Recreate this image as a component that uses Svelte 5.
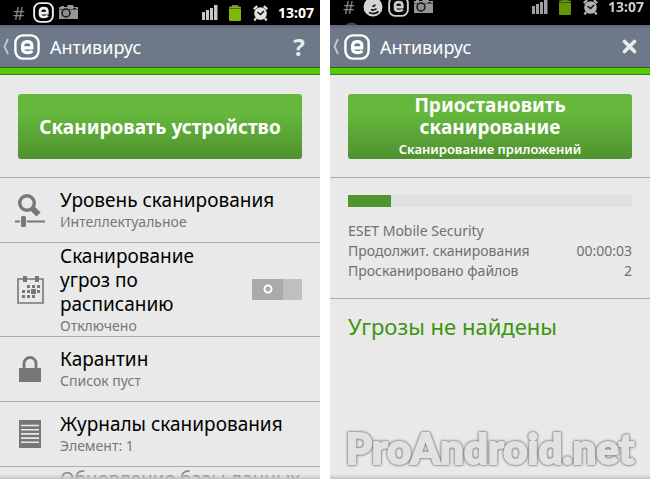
<script>
	let scheduled = false;
	let scanned = 15;
	const clock = '13:07';
	const rows = [
		{ icon: 'level', title: 'Уровень сканирования', note: 'Интеллектуальное' },
		{ icon: 'calendar', title: 'Сканирование угроз по расписанию', note: 'Отключено' },
		{ icon: 'lock', title: 'Карантин', note: 'Список пуст' },
		{ icon: 'logs', title: 'Журналы сканирования', note: 'Элемент: 1' }
	];
	const stats = [
		{ name: 'Продолжит. сканирования', value: '00:00:03' },
		{ name: 'Просканировано файлов', value: '2' }
	];
</script>

{#snippet eset(size)}
	<svg width={size} height={size} viewBox="0 0 26 26">
		<rect x="1.400" y="1.400" width="23.200" height="23.200" rx="7.500" fill="none" stroke="currentColor" stroke-width="2.400" />
		<path d="M9 13.800H17.800V11.500Q17.800 7.600 13.200 7.600T8.600 12V14.500Q8.600 18.600 13.200 18.600Q17 18.600 18.200 16.800" fill="none" stroke="currentColor" stroke-width="3.200" />
	</svg>
{/snippet}

{#snippet camera()}
	<svg width="19" height="15" viewBox="0 0 19 15">
		<path d="M0 2h2V1h3v1h3l1-2h5l1 2h4v12H0z" fill="#969696" />
		<path d="M0 4.500h19" stroke="#555" />
		<circle cx="7" cy="8" r="4" fill="#8a8a8a" stroke="#151515" stroke-width="1.500" />
		<path d="M14 3.500h3" stroke="#222" />
	</svg>
{/snippet}

{#snippet device()}
	<div class="device">
		<svg class="signal" width="16" height="15" viewBox="0 0 16 15">
			<path d="M0 7h3v8H0zM4 5h3v10H4zM8 3h3v12H8zM12 0h3.500v15H12z" fill="#c8c8c8" />
		</svg>
		<svg class="battery" width="12" height="16" viewBox="0 0 12 16">
			<path d="M3 0h6v2H3z" fill="#777" />
			<rect y="1.500" width="12" height="14.500" rx="1" fill="#80b90c" />
			<path d="M0 3.500h12" stroke="#4b7204" />
		</svg>
		<svg class="alarm" width="15" height="16" viewBox="0 0 15 16">
			<path d="M3 13l-1.500 2.500M12 13l1.500 2.500M.8 4.200l3.400-3M14.200 4.200l-3.400-3" stroke="#ddd" stroke-width="2.400" />
			<circle cx="7.500" cy="8.500" r="6.300" fill="#e2e2e2" />
			<path d="M4.500 7l3 2.500L11 6" fill="none" stroke="#111" stroke-width="1.500" />
		</svg>
		<time>{clock}</time>
	</div>
{/snippet}

{#snippet back()}
	<a class="back" href="#main" aria-label="Назад">
		<svg width="6" height="17" viewBox="0 0 6 17">
			<path d="M5 1L1.500 8.500 5 16" fill="none" stroke="#c3c9d0" stroke-width="1.800" />
		</svg>
		{@render eset(26)}
	</a>
{/snippet}

<main>
	<section class="screen">
		<div class="status">
			<div class="line">
				<span class="hash">#</span>
				{@render eset(21)}
				{@render camera()}
				{@render device()}
			</div>
		</div>
		<header>
			{@render back()}
			<h1>Антивирус</h1>
			<button class="action help" aria-label="Справка">?</button>
		</header>
		<div class="top">
			<button class="scan">Сканировать устройство</button>
		</div>
		<ul>
			{#each rows as row}
				<li class:tall={row.icon == 'calendar'}>
					<div class="icon">
						{#if row.icon == 'level'}
							<svg width="32" height="34" viewBox="0 0 32 34">
								<circle cx="13" cy="10" r="7.300" fill="none" stroke="#777" stroke-width="3.400" />
								<path d="M17.500 14.500l7 7" stroke="#777" stroke-width="6" />
								<path d="M1 28.500h5M13 28.500h18" stroke="#777" stroke-width="2" />
								<rect x="7" y="23" width="5" height="11" rx="1.500" fill="#777" />
							</svg>
						{:else if row.icon == 'calendar'}
							<svg width="27" height="28" viewBox="0 0 27 28">
								<path d="M1 3h25v24H1z" fill="none" stroke="#777" stroke-width="1.600" />
								<path d="M6 0h4v6H6zM18 0h4v6h-4z" fill="#777" />
								<path d="M10 9h3v3h-3zM15 9h3v3h-3zM20 9h3v3h-3zM5 14h3v3H5zM10 14h3v3h-3zM14 13h5v5h-5zM20 14h3v3h-3zM5 19h3v3H5zM10 19h3v3h-3zM15 19h3v3h-3z" fill="#777" />
							</svg>
						{:else if row.icon == 'lock'}
							<svg width="22" height="26" viewBox="0 0 22 26">
								<path d="M0 12h22v14H0z" fill="#777" />
								<path d="M5 13V7.500a6 6 0 0 1 12 0V13" fill="none" stroke="#777" stroke-width="2.800" />
							</svg>
						{:else}
							<svg width="22" height="28" viewBox="0 0 22 28">
								<path d="M0 0h22v28H0z" fill="#777" />
								<path d="M2 5.500h18M2 9.700h18M2 13.900h18M2 18.100h18M2 22.300h18" stroke="#e9e9e9" stroke-width="1.600" />
							</svg>
						{/if}
					</div>
					{#if row.icon == 'calendar'}
						<label class="text" for="schedule">
							<span class="title">{row.title}</span>
							<span class="note">{row.note}</span>
						</label>
						<input id="schedule" class="switch" type="checkbox" bind:checked={scheduled}>
					{:else}
						<button class="text">
							<span class="title">{row.title}</span>
							<span class="note">{row.note}</span>
						</button>
					{/if}
				</li>
			{/each}
			<li class="next">
				<div class="icon"></div>
				<button class="text">
					<span class="title">Обновление базы данных</span>
				</button>
			</li>
		</ul>
		<div class="fade"></div>
	</section>

	<section class="screen">
		<div class="status scrolled">
			<div class="line">
				<span class="hash">#</span>
				<svg width="20" height="20" viewBox="0 0 20 20">
					<circle cx="10" cy="10" r="9.500" fill="#d5d5d5" />
					<path d="M6 15.500c3 1.500 7 1 9.500-1M8 12.500c2 1 4 .5 5.500-1M9.500 9.500l3-1.500" fill="none" stroke="#111" stroke-width="1.700" />
				</svg>
				{@render eset(21)}
				{@render camera()}
				{@render device()}
			</div>
			<div class="line second">
				<svg width="17" height="17" viewBox="0 0 17 17">
					<circle cx="8.500" cy="8.500" r="8" fill="#444" />
					<path d="M4 4l4 2 5-1" stroke="#111" stroke-width="2" fill="none" />
				</svg>
			</div>
		</div>
		<header>
			{@render back()}
			<h1>Антивирус</h1>
			<button class="action" aria-label="Закрыть">
				<svg width="15" height="15" viewBox="0 0 15 15">
					<path d="M2.500 2.500l10 10M12.500 2.500l-10 10" stroke="#e9ecef" stroke-width="3.600" stroke-linecap="round" />
				</svg>
			</button>
		</header>
		<div class="top">
			<button class="scan">
				Приостановить<br>сканирование
				<small>Сканирование приложений</small>
			</button>
		</div>
		<div class="progress">
			<progress max="100" value={scanned} aria-label="Сканирование"></progress>
			<p>ESET Mobile Security</p>
			<dl>
				{#each stats as stat}
					<div>
						<dt>{stat.name}</dt>
						<dd>{stat.value}</dd>
					</div>
				{/each}
			</dl>
		</div>
		<h2>Угрозы не найдены</h2>
		<div class="mark">ProAndroid.net</div>
		<div class="fade"></div>
	</section>
</main>

<style>
	:global(body) {
		margin: 0;
		background: #fff;
	}
	main {
		display: grid;
		grid-template-columns: 1fr 1fr;
		gap: 10px;
		height: 100vh;
		font-family: "Noto Sans", "Open Sans", sans-serif;
	}
	.screen {
		position: relative;
		display: flex;
		flex-direction: column;
		min-width: 0;
		overflow: hidden;
		background: #e9e9e9;
	}
	button {
		padding: 0;
		border: 0;
		background: none;
		font: inherit;
		color: inherit;
		cursor: pointer;
	}
	svg {
		display: block;
		flex: none;
	}
	.status {
		flex: none;
		height: 25px;
		overflow: hidden;
		background: #000;
		color: #eee;
	}
	.line {
		display: flex;
		align-items: center;
		gap: 5px;
		height: 25px;
		padding: 0 6px 0 13px;
	}
	.scrolled .line {
		height: 13px;
		color: #ccc;
	}
	.scrolled .second {
		height: 34px;
	}
	.hash {
		width: 15px;
		font-size: 18px;
		color: #888;
	}
	.device {
		display: flex;
		align-items: center;
		margin-left: auto;
	}
	.scrolled .device {
		opacity: 0.8;
	}
	.battery {
		margin-left: 11px;
	}
	.alarm {
		margin: 0 10px 0 12px;
	}
	time {
		font-size: 14px;
		font-weight: 700;
		line-height: 16px;
		color: #fff;
	}
	header {
		flex: none;
		display: flex;
		align-items: center;
		height: 43px;
		padding: 0 12px 0 3px;
		background: linear-gradient(#5d6977, #6d7989 4px);
		border-bottom: 6px solid #55cb06;
		box-shadow: inset 0 -1px #3c5a2c, 0 1px #3f7d1c;
		color: #fff;
	}
	.back {
		display: flex;
		align-items: center;
		gap: 5px;
		color: #fff;
	}
	h1 {
		flex: 1;
		margin: 0 0 0 10px;
		font-size: 18px;
		font-weight: 400;
	}
	.action {
		display: flex;
		justify-content: center;
		width: 18px;
		color: #e9ecef;
	}
	.help {
		font-size: 24px;
		font-weight: 700;
	}
	.top {
		flex: none;
		padding: 20px 18px 18px;
		border-bottom: 1px solid #aeaeae;
	}
	.scan {
		display: block;
		width: 100%;
		height: 65px;
		overflow: hidden;
		border-radius: 3px;
		background: linear-gradient(#65b83c 30%, #4f912f);
		font-size: 19px;
		font-weight: 700;
		line-height: 22px;
		color: #fff;
	}
	small {
		display: block;
		font-size: 13px;
		font-weight: 600;
	}
	ul {
		margin: 0;
		padding: 0;
		list-style: none;
	}
	li {
		display: flex;
		align-items: center;
		min-height: 64px;
		padding-right: 18px;
		border-bottom: 1px solid #aeaeae;
	}
	.tall {
		gap: 0 24px;
		min-height: 93px;
	}
	.icon {
		flex: none;
		display: flex;
		justify-content: center;
		width: 60px;
	}
	.tall .icon {
		margin-right: -24px;
	}
	.text {
		flex: 1;
		text-align: left;
	}
	.title, .note {
		display: block;
	}
	.title {
		font-size: 19px;
		line-height: 24px;
		color: #000;
	}
	.note {
		font-size: 14px;
		line-height: 20px;
		color: #777;
	}
	.next .title {
		white-space: nowrap;
		color: #888;
	}
	.next {
		align-items: flex-start;
	}
	.switch {
		appearance: none;
		flex: none;
		width: 50px;
		height: 21px;
		margin: 0;
		background: radial-gradient(circle at 16px 10px, #a8a8a8 2px, #fff 3px, #fff 4px, transparent 5px), linear-gradient(90deg, #aaa 31px, #bfbfbf 31px);
	}
	.switch:checked {
		transform: scaleX(-1);
	}
	.progress {
		padding: 17px 18px;
		border-bottom: 1px solid #aeaeae;
		font-size: 14px;
		line-height: 20px;
		color: #707070;
	}
	progress {
		appearance: none;
		display: block;
		width: 100%;
		height: 12px;
		margin-bottom: 14px;
		border: 0;
	}
	progress::-webkit-progress-bar {
		background: #e0e0e0;
	}
	progress::-webkit-progress-value {
		background: #4f962e;
	}
	p, dl, dd {
		margin: 0;
	}
	dl div {
		display: flex;
		justify-content: space-between;
	}
	h2 {
		margin: 12px 18px;
		font-size: 22px;
		font-weight: 400;
		line-height: 30px;
		color: #3a960f;
	}
	.mark {
		margin: auto 0 7px;
		text-align: center;
		font-family: Lato, sans-serif;
		font-size: 42px;
		font-weight: 900;
		line-height: 48px;
		color: #e2e2e2;
		-webkit-text-stroke: 2px #e2e2e2;
		filter: drop-shadow(0 0 1px #666) drop-shadow(0 0 1px #aaa);
	}
	.fade {
		position: absolute;
		right: 0;
		bottom: 0;
		left: 0;
		height: 5px;
		background: linear-gradient(transparent, #c4c4c4);
	}
</style>
